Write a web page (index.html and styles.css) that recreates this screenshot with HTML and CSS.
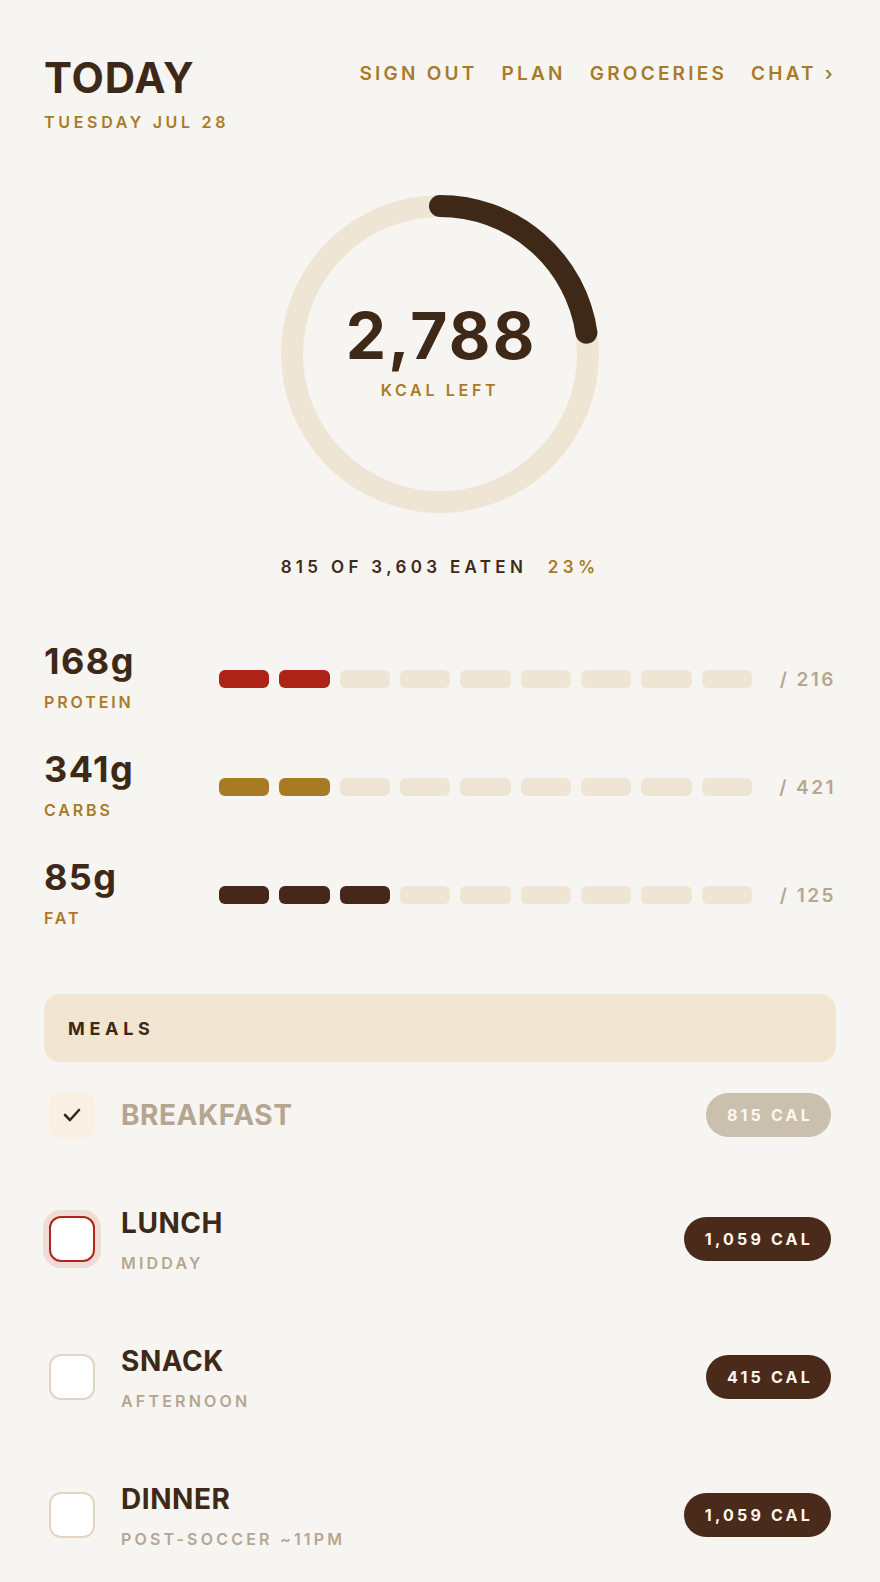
FILE: index.html
```html
<!DOCTYPE html>
<html lang="en">
<head>
    <meta charset="UTF-8">
    <meta name="viewport" content="width=device-width, initial-scale=1.0">
    <title>Today</title>
    <link rel="stylesheet" href="styles.css">
</head>
<body>
    <div class="page">
        <header class="top">
            <div class="title-block">
                <h1>TODAY</h1>
                <p class="date">TUESDAY JUL 28</p>
            </div>
            <nav class="nav">
                <a href="#">SIGN OUT</a>
                <a href="#">PLAN</a>
                <a href="#">GROCERIES</a>
                <a href="#">CHAT ›</a>
            </nav>
        </header>

        <section class="ring-wrap">
            <div class="ring">
                <svg width="318" height="318" viewBox="0 0 318 318">
                    <circle cx="159" cy="159" r="148" fill="none" stroke="#efe5d4" stroke-width="22" />
                    <circle cx="159" cy="159" r="148" fill="none" stroke="#3e2919" stroke-width="22"
                        stroke-linecap="round" stroke-dasharray="211 930" transform="rotate(-90 159 159)" />
                </svg>
                <div class="ring-text">
                    <div class="kcal">2,788</div>
                    <div class="kcal-label">KCAL LEFT</div>
                </div>
            </div>
            <p class="eaten">815 OF 3,603 EATEN <span class="pct">23%</span></p>
        </section>

        <section class="macros">
            <div class="macro">
                <div class="macro-name">
                    <div class="grams">168g</div>
                    <div class="macro-label">PROTEIN</div>
                </div>
                <div class="bars protein">
                    <span class="on"></span><span class="on"></span><span></span><span></span><span></span><span></span><span></span><span></span><span></span>
                </div>
                <div class="goal">/ 216</div>
            </div>
            <div class="macro">
                <div class="macro-name">
                    <div class="grams">341g</div>
                    <div class="macro-label">CARBS</div>
                </div>
                <div class="bars carbs">
                    <span class="on"></span><span class="on"></span><span></span><span></span><span></span><span></span><span></span><span></span><span></span>
                </div>
                <div class="goal">/ 421</div>
            </div>
            <div class="macro">
                <div class="macro-name">
                    <div class="grams">85g</div>
                    <div class="macro-label">FAT</div>
                </div>
                <div class="bars fat">
                    <span class="on"></span><span class="on"></span><span class="on"></span><span></span><span></span><span></span><span></span><span></span><span></span>
                </div>
                <div class="goal">/ 125</div>
            </div>
        </section>

        <section class="meals">
            <div class="meals-head">MEALS</div>

            <div class="meal done">
                <div class="check">
                    <svg width="18" height="14" viewBox="0 0 18 14">
                        <polyline points="2,7 7,12 16,2" fill="none" stroke="#3e2919" stroke-width="2.6" stroke-linecap="round" stroke-linejoin="round" />
                    </svg>
                </div>
                <div class="meal-info">
                    <div class="meal-name">BREAKFAST</div>
                </div>
                <div class="pill">815 CAL</div>
            </div>

            <div class="meal">
                <div class="check current"></div>
                <div class="meal-info">
                    <div class="meal-name">LUNCH</div>
                    <div class="meal-sub">MIDDAY</div>
                </div>
                <div class="pill">1,059 CAL</div>
            </div>

            <div class="meal">
                <div class="check"></div>
                <div class="meal-info">
                    <div class="meal-name">SNACK</div>
                    <div class="meal-sub">AFTERNOON</div>
                </div>
                <div class="pill">415 CAL</div>
            </div>

            <div class="meal">
                <div class="check"></div>
                <div class="meal-info">
                    <div class="meal-name">DINNER</div>
                    <div class="meal-sub">POST-SOCCER ~11PM</div>
                </div>
                <div class="pill">1,059 CAL</div>
            </div>
        </section>
    </div>
</body>
</html>
```

FILE: styles.css
```css
body {
    margin: 0;
    background-color: #f7f5f1;
    font-family: Inter, "Liberation Sans", sans-serif;
    color: #3e2919;
}

.page {
    padding: 57px 44px 40px;
}

/* header */

.top {
    display: flex;
    justify-content: space-between;
    align-items: flex-start;
}

h1 {
    margin: 0;
    font-size: 42px;
    line-height: 42px;
    font-weight: 700;
    letter-spacing: 0.02em;
}

.date {
    margin: 13px 0 0;
    font-size: 16px;
    line-height: 20px;
    font-weight: 600;
    letter-spacing: 0.23em;
    color: #a97a28;
}

.nav {
    display: flex;
    gap: 24px;
    margin-top: 5px;
}

.nav a {
    font-size: 19px;
    line-height: 24px;
    font-weight: 600;
    letter-spacing: 0.17em;
    color: #a97a28;
    text-decoration: none;
}

/* ring */

.ring-wrap {
    display: flex;
    flex-direction: column;
    align-items: center;
    margin-top: 63px;
}

.ring {
    position: relative;
    width: 318px;
    height: 318px;
}

.ring svg {
    display: block;
}

.ring-text {
    position: absolute;
    inset: 0;
    display: flex;
    flex-direction: column;
    align-items: center;
    justify-content: center;
    padding-bottom: 4px;
}

.kcal {
    font-size: 64px;
    line-height: 64px;
    font-weight: 700;
    letter-spacing: 0.035em;
    margin-right: -0.035em;
}

.kcal-label {
    margin-top: 12px;
    font-size: 16px;
    line-height: 20px;
    font-weight: 600;
    letter-spacing: 0.23em;
    color: #a97a28;
}

.eaten {
    margin: 44px 0 0;
    font-size: 17px;
    line-height: 20px;
    font-weight: 600;
    letter-spacing: 0.255em;
}

.eaten .pct {
    margin-left: 12px;
    color: #a97a28;
}

/* macros */

.macros {
    margin-top: 66px;
    display: flex;
    flex-direction: column;
    gap: 40px;
}

.macro {
    display: grid;
    grid-template-columns: 175px 1fr 84px;
    align-items: center;
}

.grams {
    font-size: 36px;
    line-height: 36px;
    font-weight: 700;
    letter-spacing: 0.04em;
}

.macro-label {
    margin-top: 14px;
    font-size: 16px;
    line-height: 18px;
    font-weight: 600;
    letter-spacing: 0.18em;
    color: #a97a28;
}

.bars {
    display: flex;
    gap: 10px;
    margin-top: 4px;
}

.bars span {
    flex: 1;
    height: 18px;
    border-radius: 6px;
    background-color: #efe5d4;
}

.bars.protein .on {
    background-color: #ad2318;
}

.bars.carbs .on {
    background-color: #a97a24;
}

.bars.fat .on {
    background-color: #46271a;
}

.goal {
    margin-top: 4px;
    text-align: right;
    font-size: 19px;
    font-weight: 600;
    letter-spacing: 0.13em;
    color: #b5a591;
}

/* meals */

.meals {
    margin-top: 67px;
}

.meals-head {
    height: 68px;
    display: flex;
    align-items: center;
    padding: 0 24px;
    border-radius: 16px;
    background-color: #f2e6d3;
    font-size: 18px;
    font-weight: 700;
    letter-spacing: 0.26em;
}

.meal {
    display: flex;
    align-items: center;
    padding: 35.5px 5px;
}

.meal.done {
    padding: 30px 5px 32px;
}

.check {
    width: 42px;
    height: 42px;
    flex-shrink: 0;
    border: 2px solid #e2d5c1;
    border-radius: 12px;
    background-color: #fff;
    display: flex;
    align-items: center;
    justify-content: center;
}

.meal.done .check {
    border-color: #f9efe2;
    background-color: #f9efe2;
}

.check.current {
    border-color: #b0251a;
    box-shadow: 0 0 0 6px #f0dcd7;
}

.meal-info {
    flex: 1;
    margin-left: 26px;
}

.meal-name {
    font-size: 28px;
    line-height: 34px;
    font-weight: 700;
    letter-spacing: 0.02em;
}

.meal.done .meal-name {
    color: #b5a591;
}

.meal-sub {
    margin-top: 14px;
    font-size: 16px;
    line-height: 19px;
    font-weight: 600;
    letter-spacing: 0.2em;
    color: #b5a591;
}

.pill {
    height: 44px;
    display: flex;
    align-items: center;
    padding: 0 18px 0 21px;
    border-radius: 22px;
    background-color: #4a2a1b;
    color: #fff8ee;
    font-size: 16px;
    font-weight: 700;
    letter-spacing: 0.2em;
}

.meal.done .pill {
    background-color: #cbbfae;
}
```
